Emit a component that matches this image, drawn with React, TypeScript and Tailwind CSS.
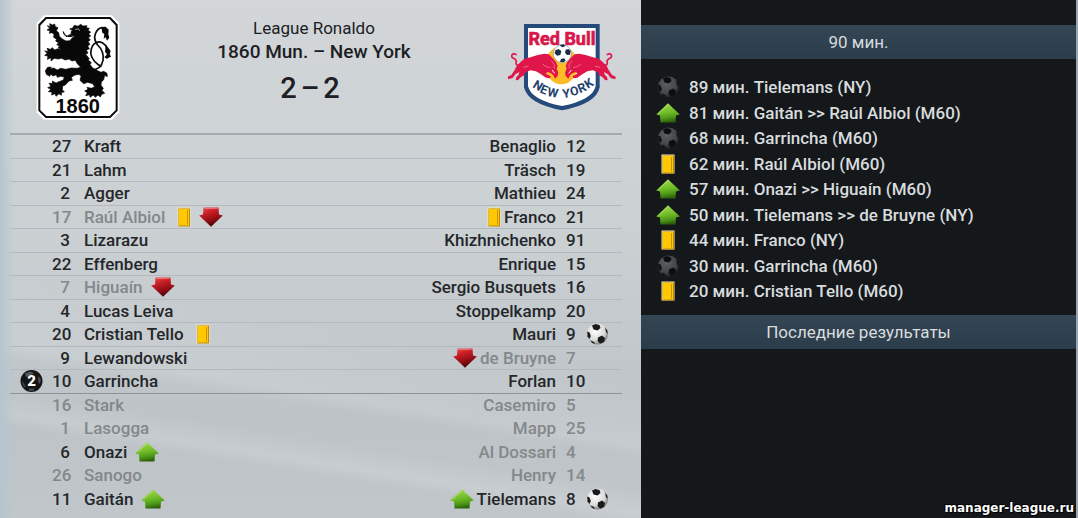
import React from "react";

type Mark = "card" | "in" | "out" | "goal" | "goal2";

interface Player {
    num: number;
    name: string;
    marks?: Mark[];
    off?: boolean;
}

const home: Player[] = [
    { num: 27, name: "Kraft" },
    { num: 21, name: "Lahm" },
    { num: 2, name: "Agger" },
    { num: 17, name: "Raúl Albiol", marks: ["card", "out"], off: true },
    { num: 3, name: "Lizarazu" },
    { num: 22, name: "Effenberg" },
    { num: 7, name: "Higuaín", marks: ["out"], off: true },
    { num: 4, name: "Lucas Leiva" },
    { num: 20, name: "Cristian Tello", marks: ["card"] },
    { num: 9, name: "Lewandowski" },
    { num: 10, name: "Garrincha", marks: ["goal2"] },
    { num: 16, name: "Stark", off: true },
    { num: 1, name: "Lasogga", off: true },
    { num: 6, name: "Onazi", marks: ["in"] },
    { num: 26, name: "Sanogo", off: true },
    { num: 11, name: "Gaitán", marks: ["in"] },
];

const away: Player[] = [
    { num: 12, name: "Benaglio" },
    { num: 19, name: "Träsch" },
    { num: 24, name: "Mathieu" },
    { num: 21, name: "Franco", marks: ["card"] },
    { num: 91, name: "Khizhnichenko" },
    { num: 15, name: "Enrique" },
    { num: 16, name: "Sergio Busquets" },
    { num: 20, name: "Stoppelkamp" },
    { num: 9, name: "Mauri", marks: ["goal"] },
    { num: 7, name: "de Bruyne", marks: ["out"], off: true },
    { num: 10, name: "Forlan" },
    { num: 5, name: "Casemiro", off: true },
    { num: 25, name: "Mapp", off: true },
    { num: 4, name: "Al Dossari", off: true },
    { num: 14, name: "Henry", off: true },
    { num: 8, name: "Tielemans", marks: ["in", "goal"] },
];

const events: { mark: Mark; text: string }[] = [
    { mark: "goal", text: "89 мин. Tielemans (NY)" },
    { mark: "in", text: "81 мин. Gaitán >> Raúl Albiol (M60)" },
    { mark: "goal", text: "68 мин. Garrincha (M60)" },
    { mark: "card", text: "62 мин. Raúl Albiol (M60)" },
    { mark: "in", text: "57 мин. Onazi >> Higuaín (M60)" },
    { mark: "in", text: "50 мин. Tielemans >> de Bruyne (NY)" },
    { mark: "card", text: "44 мин. Franco (NY)" },
    { mark: "goal", text: "30 мин. Garrincha (M60)" },
    { mark: "card", text: "20 мин. Cristian Tello (M60)" },
];

// gradients shared by the row icons
function IconDefs() {
    return (
        <svg className="absolute size-0" aria-hidden="true">
            <defs>
                <linearGradient id="outFill" x1="0" y1="0" x2="0.4" y2="1">
                    <stop offset="0" stopColor="#e8595d" />
                    <stop offset="0.35" stopColor="#cb1f27" />
                    <stop offset="0.75" stopColor="#8e0d14" />
                    <stop offset="1" stopColor="#4d0508" />
                </linearGradient>
                <linearGradient id="inFill" x1="0.2" y1="0" x2="0.4" y2="1">
                    <stop offset="0" stopColor="#a4dc52" />
                    <stop offset="0.55" stopColor="#6bb825" />
                    <stop offset="0.8" stopColor="#4a9417" />
                    <stop offset="1" stopColor="#2c610c" />
                </linearGradient>
                <radialGradient id="ballLight" cx="0.4" cy="0.35" r="0.7">
                    <stop offset="0" stopColor="#ffffff" />
                    <stop offset="0.65" stopColor="#d9d9d7" />
                    <stop offset="1" stopColor="#68696a" />
                </radialGradient>
                <radialGradient id="ballDark" cx="0.4" cy="0.35" r="0.7">
                    <stop offset="0" stopColor="#5c5e60" />
                    <stop offset="0.65" stopColor="#45474a" />
                    <stop offset="1" stopColor="#18191b" />
                </radialGradient>
            </defs>
        </svg>
    );
}

function Card() {
    return (
        <svg className="w-[14px] h-5 shrink-0" viewBox="0 0 14 20">
            <rect x="0.5" y="0.5" width="13" height="19" fill="#f6e7a6" />
            <rect x="1.5" y="1.5" width="11.5" height="18" fill="#b98a16" />
            <rect x="2" y="2" width="10" height="16.5" fill="#ffc800" />
            <path d="M10.5 3V17.5" stroke="#c9930c" />
        </svg>
    );
}

function SubOut() {
    return (
        <svg className="w-6 h-5 shrink-0" viewBox="0 0 24 20">
            <path d="M4.5 0.5H19.5L20 7.5L23.8 8.5L12 19.8L0.2 8.5L4 7.5Z" fill="url(#outFill)" />
            <path d="M5.5 1.5H18.5" stroke="#ee8a8c" strokeOpacity="0.7" />
        </svg>
    );
}

function SubIn() {
    return (
        <svg className="w-6 h-5 shrink-0" viewBox="0 0 24 20">
            <path d="M12 0.3L23.8 11.5L20 12.5L19.5 19.5H4.5L4 12.5L0.2 11.5Z" fill="url(#inFill)" />
            <path d="M12 1.5L2.5 10.8" stroke="#c2ea80" strokeOpacity="0.7" />
        </svg>
    );
}

function Ball({ dark = false }: { dark?: boolean }) {
    const spot = dark ? "#0c0d0e" : "#191a1c";
    return (
        <svg className="w-[23px] h-[22px] shrink-0" viewBox="0 0 23 22">
            <circle cx="11.5" cy="11" r="10.5" fill={dark ? "url(#ballDark)" : "url(#ballLight)"} />
            <path d="M6 2.5L9.5 1L13.5 2L14.5 5L11.5 7.5L7.5 6.5Z" fill={spot} />
            <path d="M1.2 8.5L3.5 9.5L4.8 13L3.5 16L1.5 13.5Z" fill={spot} />
            <path d="M12 14.5L16 12.5L19 15L18 19L14 20.5L11.5 18Z" fill={spot} />
            <path d="M19 4.5L21.2 7.5L21.8 11L20 9Z" fill={spot} />
            <path d="M4.5 17.5L8 19L9 21L6 19.8Z" fill={spot} />
        </svg>
    );
}

function DoubleBall() {
    return (
        <svg className="w-[23px] h-[22px] shrink-0" viewBox="0 0 23 22">
            <circle cx="11.5" cy="11" r="11" fill="#131517" />
            <path d="M5 3.5L10 1.5L14 3L11 5L6 7Z" fill="#55575a" />
            <path d="M2 11L4 13L6 18L3 16Z" fill="#3f4245" />
            <path d="M18 6L21 9L20 14L18 12Z" fill="#484b4e" />
            <path d="M9 18.5L15 18.5L13 21L9 21Z" fill="#45484b" />
            <text x="11.5" y="16" textAnchor="middle" fontFamily="Roboto, sans-serif" fontWeight="900" fontSize="15" fill="#fff">2</text>
        </svg>
    );
}

function MarkIcon({ mark, dark }: { mark: Mark; dark?: boolean }) {
    if (mark === "card") return <Card />;
    if (mark === "in") return <SubIn />;
    if (mark === "out") return <SubOut />;
    if (mark === "goal2") return <DoubleBall />;
    return <Ball dark={dark} />;
}

function MunichCrest() {
    return (
        <svg className="w-[84px] h-[105px] shrink-0" viewBox="108 44 252 315" role="img" aria-label="1860 Mun.">
            <path d="M132 45H336L358 68V336L336 358H132L110 336V68Z" fill="#fff" />
            <path d="M138 53H330L350 74V330L330 350H138L118 330V74Z" fill="#fff" stroke="#0b0b0b" strokeWidth="6" />
            {/* lion */}
            <path
                d="M142 76L151 79L149 70L158 74L164 71L166 79L174 82L169 91L176 97L178 108L187 116L198 122L210 121L217 112L224 110L216 105L211 108L203 106L214 101L213 95L217 89L209 86L218 83L223 75L234 78L242 72L249 77L261 76L259 82L268 84L264 90L272 95L266 101L272 107L265 112L271 119L264 124L270 132L263 137L268 145L259 150L264 158L257 162L268 175L264 178L274 187L270 192L277 202L290 210L303 216L311 213L321 219L322 229L314 225L311 238L304 245L303 255L310 264L306 270L314 279L305 282L301 290L294 284L286 291L280 284L270 291L269 283L257 286L262 277L254 272L264 267L261 261L274 264L284 259L278 250L263 246L251 250L240 240L243 228L237 222L225 224L214 231L217 240L207 242L196 254L188 257L187 268L193 275L185 276L184 285L177 280L168 288L165 280L155 284L156 275L145 274L153 267L143 262L153 258L147 249L158 249L157 242L168 248L177 244L190 239L193 230L182 228L172 231L169 223L159 227L152 221L149 228L139 222L136 211L143 201L154 200L150 206L161 203L172 209L182 204L197 207L214 203L231 204L242 201L232 190L226 180L216 182L207 176L196 179L185 174L174 176L163 174L153 182L153 172L142 177L144 168L134 165L142 159L134 152L145 153L141 144L151 147L157 142L164 149L174 145L183 149L174 141L180 137L170 133L176 128L167 122L170 117L161 111L162 101L155 97L148 99L150 91L141 89L149 84Z"
                fill="#080808"
                stroke="#080808"
                strokeWidth="2"
            />
            <path d="M218 108Q206 111 198 106Q190 101 190 94Q191 105 201 110" fill="none" stroke="#080808" strokeWidth="3" />
            <path d="M226 87L235 86L240 91" fill="none" stroke="#fff" strokeWidth="2" />
            <path d="M275 209Q304 207 309 180Q313 153 293 134Q280 117 286 101Q292 84 306 82L318 86" fill="none" stroke="#080808" strokeWidth="5" />
            <path d="M304 199Q278 184 273 163Q271 145 281 132Q292 121 307 127Q318 133 322 145" fill="none" stroke="#080808" strokeWidth="5" />
            <path d="M304 80L317 79L326 88L325 102L328 112L321 121L317 111L311 115L313 101L307 97Z" fill="#080808" />
            <path d="M317 134L325 142L332 152L329 161L333 169L320 175L313 171L321 162L315 154Z" fill="#080808" />
            <text x="233" y="337" textAnchor="middle" fontFamily="Liberation Sans, Arial, sans-serif" fontWeight="700" fontSize="60" fill="#080808">1860</text>
        </svg>
    );
}

function Bull() {
    return (
        <g transform="translate(45 60)">
            <path
                d="M46 130L60 117L84 110L104 104L122 101L134 103L146 114L156 126L161 138L158 146L163 158L161 168L153 176L148 166L140 159L130 156L126 161L140 169L138 175L126 173L110 162L96 154L80 151L66 156L60 166L50 172L42 181L35 180L37 171L44 164L46 156L34 163L26 174L12 178L11 170L22 165L32 150L38 138Z"
                fill="#e0164b"
            />
            <path d="M48 134Q33 139 37 124Q36 117 25 113Q20 104 29 101L38 104" fill="none" stroke="#e0164b" strokeWidth="5" />
            <path d="M115 132Q126 142 139 143M142 122L151 134L150 146M58 142L74 138" fill="none" stroke="#f08aa3" strokeWidth="2" />
            <path d="M144 150L152 160" fill="none" stroke="#fff" strokeWidth="3" />
        </g>
    );
}

function NewYorkCrest() {
    return (
        <svg className="w-[108px] h-[90px] shrink-0" viewBox="57 69 324 270" role="img" aria-label="New York">
            <path d="M105 72H332V262Q322 312 219 331Q116 312 105 262Z" fill="#234a78" />
            <path d="M117 84H320V258Q311 300 219 318Q126 300 117 258Z" fill="#fff" />
            <ellipse cx="217" cy="196" rx="49" ry="57" fill="#fdbb25" />
            <text x="219" y="135" textAnchor="middle" fontFamily="Roboto, sans-serif" fontWeight="700" fontSize="54" fill="#d8184b" stroke="#d8184b" strokeWidth="2">Red Bull</text>
            <Bull />
            <g transform="translate(436 0) scale(-1 1)">
                <Bull />
            </g>
            <circle cx="220" cy="161" r="27" fill="#fff" stroke="#8197ac" strokeWidth="2" />
            <path d="M199 151L208 147L217 153L214 165L204 167L197 160ZM230 149L238 147L245 153L243 164L234 165L228 158ZM216 177L226 175L230 182L222 187L213 185ZM211 135L224 133L230 138L220 142Z" fill="#182d49" />
            <text
                x="129 151 173 205 222 247 273 296"
                y="260 277 287 292 295 289 280 267"
                rotate="32 22 11 0 -8 -15 -24 -32"
                fontFamily="Roboto, sans-serif"
                fontWeight="700"
                fontSize="37"
                fill="#1f426e"
            >
                NEW YORK
            </text>
        </svg>
    );
}

function LineupRow({ left, right, index }: { left: Player; right: Player; index: number }) {
    const line = index < 10 ? "border-b border-[#b3b9be]" : index === 10 ? "border-b border-[#8d9296]" : "";
    const leftColor = left.off ? "text-[#83888b]" : "text-[#24272a]";
    const rightColor = right.off ? "text-[#83888b]" : "text-[#24272a]";
    const leftBall = left.marks?.find((m) => m === "goal2");
    const rightBall = right.marks?.find((m) => m === "goal");
    const leftMarks = left.marks?.filter((m) => m !== "goal2") ?? [];
    const rightMarks = right.marks?.filter((m) => m !== "goal") ?? [];

    return (
        <tr className={`odd:h-6 even:h-[23px] ${line}`}>
            <td className="p-0">
                <div className="flex h-5 items-center justify-center">{leftBall && <MarkIcon mark={leftBall} />}</div>
            </td>
            <td className={`p-0 text-right ${leftColor}`}>{left.num}</td>
            <td className={`p-0 pl-[14px] ${leftColor}`}>
                <div className="flex h-5 items-center gap-2">
                    <span className={leftMarks[0] === "card" ? "pr-1" : ""}>{left.name}</span>
                    {leftMarks.map((m) => <MarkIcon key={m} mark={m} />)}
                </div>
            </td>
            <td className={`p-0 pr-[10px] ${rightColor}`}>
                <div className="flex h-5 items-center justify-end gap-[3px]">
                    {rightMarks.map((m) => <MarkIcon key={m} mark={m} />)}
                    <span>{right.name}</span>
                </div>
            </td>
            <td className={`p-0 ${rightColor}`}>{right.num}</td>
            <td className="p-0">
                <div className="flex h-5 items-center">{rightBall && <MarkIcon mark={rightBall} />}</div>
            </td>
        </tr>
    );
}

function App() {
    return (
        <div className="grid min-h-screen grid-cols-[641fr_437fr] bg-[#14181b] font-['Roboto','Noto_Sans',sans-serif] text-[17px] leading-5 font-medium">
            <IconDefs />

            {/* Lineups */}
            <main className="bg-[linear-gradient(90deg,#b5c5d0_0px,transparent_14px),linear-gradient(189deg,transparent_60%,#ffffff20_72%,transparent_74%,transparent_79%,#ffffff24_83%,transparent_85%),linear-gradient(180deg,#d2d6d9_0%,#cbd0d3_45%,#bdc3c7_80%,#c1c6ca_100%)] pr-[19px] pl-[10px]">
                <header className="flex h-[133px] items-start pt-[15px] pr-[6px] pl-[26px]">
                    <MunichCrest />
                    <div className="flex-1 pt-[3px] text-center text-[#1c2024]">
                        <p className="font-normal">League Ronaldo</p>
                        <h1 className="text-[19px] leading-7">1860 Mun. – New York</h1>
                        <p className="mt-[2px] flex justify-center gap-1 pr-2 text-[29px] leading-10">
                            <span>2</span>
                            <span>–</span>
                            <span>2</span>
                        </p>
                    </div>
                    <div className="pt-2">
                        <NewYorkCrest />
                    </div>
                </header>

                <table className="w-full table-fixed border-collapse border-t-2 border-[#a5abaf]">
                    <colgroup>
                        <col className="w-[42px]" />
                        <col className="w-[18px]" />
                        <col />
                        <col />
                        <col className="w-[20px]" />
                        <col className="w-[36px]" />
                    </colgroup>
                    <tbody>
                        {home.map((player, i) => (
                            <LineupRow key={player.name} left={player} right={away[i]} index={i} />
                        ))}
                    </tbody>
                </table>
            </main>

            {/* Match events */}
            <aside className="flex flex-col border-r-2 border-[#9aa5b0] pt-[25px] text-[#d9dcde]">
                <h2 className="bg-linear-to-b from-[#344654] to-[#2b3c4b] py-[7px] text-center font-normal">90 мин.</h2>
                <ul className="pt-[15px] pr-4 pb-[11px] pl-[15px]">
                    {events.map((event) => (
                        <li key={event.text} className="flex items-center gap-[9px] odd:h-[26px] even:h-[25px]">
                            <span className="flex w-6 justify-center">
                                <MarkIcon mark={event.mark} dark />
                            </span>
                            {event.text}
                        </li>
                    ))}
                </ul>
                <h2 className="bg-linear-to-b from-[#344654] to-[#2b3c4b] py-[7px] text-center font-normal">Последние результаты</h2>
                <a
                    href="#"
                    className="mt-auto mr-[2px] mb-[2px] self-end font-['DejaVu_Sans',sans-serif] text-[12px] leading-4 font-bold text-white [text-shadow:1px_1px_0_#000,-1px_-1px_0_#000]"
                >
                    manager-league.ru
                </a>
            </aside>
        </div>
    );
}

export default App;
